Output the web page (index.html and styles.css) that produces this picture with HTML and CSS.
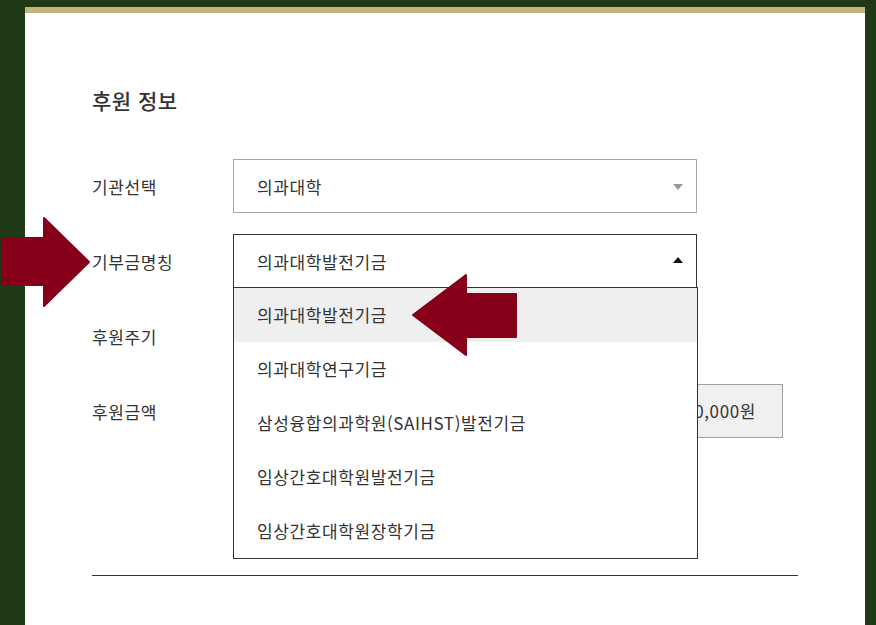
FILE: index.html
```html
<!DOCTYPE html>
<html lang="ko">
<head>
<meta charset="UTF-8">
<meta name="viewport" content="width=device-width, initial-scale=1.0">
<title>후원 정보</title>
<link rel="stylesheet" href="styles.css">
</head>
<body>

<div class="panel">
    <h2 class="title">후원 정보</h2>

    <div class="row">
        <div class="label">기관선택</div>
        <div class="select">
            <span>의과대학</span>
            <i class="caret down"></i>
        </div>
    </div>

    <div class="row">
        <div class="label">기부금명칭</div>
        <div class="select open">
            <span>의과대학발전기금</span>
            <i class="caret up"></i>
            <ul class="options">
                <li class="active">의과대학발전기금</li>
                <li>의과대학연구기금</li>
                <li>삼성융합의과학원(SAIHST)발전기금</li>
                <li>임상간호대학원발전기금</li>
                <li>임상간호대학원장학기금</li>
            </ul>
        </div>
    </div>

    <div class="row">
        <div class="label">후원주기</div>
        <div class="choices">
            <div class="choice">정기후원</div>
            <div class="choice">일시후원</div>
        </div>
    </div>

    <div class="row">
        <div class="label">후원금액</div>
        <div class="amounts">
            <div class="amount">10,000원</div>
            <div class="amount">30,000원</div>
            <div class="amount">50,000원</div>
            <div class="amount">100,000원</div>
        </div>
    </div>

    <hr class="divider">
</div>

<!-- red pointer arrows laid over the form -->
<svg class="pointer pointer-right" width="92" height="92" viewBox="0 0 92 92">
    <polygon points="2,22 44,22 44,2 89,46 44,90 44,69 2,69" fill="#86001a" stroke="#86001a" stroke-width="2" stroke-linejoin="round"/>
</svg>
<svg class="pointer pointer-left" width="108" height="84" viewBox="0 0 108 84">
    <polygon points="3,42 56,2 56,21 106,21 106,64 56,64 56,82" fill="#86001a" stroke="#86001a" stroke-width="2" stroke-linejoin="round"/>
</svg>

</body>
</html>
```

FILE: styles.css
```css
body {
    margin: 0;
    background-color: #213a16;
    font-family: "Noto Sans CJK KR", "Noto Sans", sans-serif;
    color: #333;
    height: 625px;
    overflow: hidden;
}
.panel {
    margin: 7px 11px 0 25px;
    height: 620px;
    background-color: #fff;
    border-top: 6px solid #c4b57e;
    padding: 73px 67px 0 67px;
    box-sizing: border-box;
}
.title {
    margin: 0 0 45px 0;
    font-size: 21px;
    font-weight: 500;
    line-height: 28px;
    letter-spacing: 0.5px;
}
.row {
    display: flex;
    align-items: center;
    height: 54px;
    margin-bottom: 21px;
}
.label {
    width: 141px;
    flex: 0 0 auto;
    font-size: 17px;
    letter-spacing: 0.6px;
}
.select {
    position: relative;
    width: 464px;
    height: 54px;
    box-sizing: border-box;
    border: 1px solid #a6a6a6;
    padding: 0 23px;
    display: flex;
    align-items: center;
    font-size: 17px;
    letter-spacing: 0.6px;
    background: #fff;
}
.select.open {
    border-color: #333;
    z-index: 2;
}
.caret {
    position: absolute;
    right: 13px;
    top: 50%;
    width: 0;
    height: 0;
    border-left: 5px solid transparent;
    border-right: 5px solid transparent;
}
.caret.down {
    border-top: 6px solid #9a9a9a;
    margin-top: -2px;
}
.caret.up {
    border-bottom: 6px solid #111;
    margin-top: -4px;
}
.options {
    position: absolute;
    left: -1px;
    top: 52px;
    width: 463px;
    margin: 0;
    padding: 0;
    list-style: none;
    background: #fff;
    border: 1px solid #333;
}
.options li {
    height: 54px;
    line-height: 54px;
    padding-left: 23px;
}
.options li.active {
    background-color: #efefef;
}
.choices {
    display: flex;
    gap: 10px;
}
.choice {
    width: 140px;
    height: 54px;
    box-sizing: border-box;
    border: 1px solid #a6a6a6;
    text-align: center;
    line-height: 52px;
    font-size: 17px;
}
.amounts {
    display: flex;
    justify-content: space-between;
    width: 550px;
}
.amount {
    width: 122px;
    height: 54px;
    box-sizing: border-box;
    border: 1px solid #a0a0a0;
    background-color: #f0f0f0;
    text-align: right;
    padding-right: 26px;
    line-height: 52px;
    font-size: 17px;
    letter-spacing: 0.6px;
}
.divider {
    margin: 137px 0 0 0;
    border: 0;
    border-top: 1px solid #333;
}
.pointer {
    position: absolute;
    z-index: 5;
}
.pointer-right {
    left: 0;
    top: 216px;
}
.pointer-left {
    left: 410px;
    top: 273px;
}
```
